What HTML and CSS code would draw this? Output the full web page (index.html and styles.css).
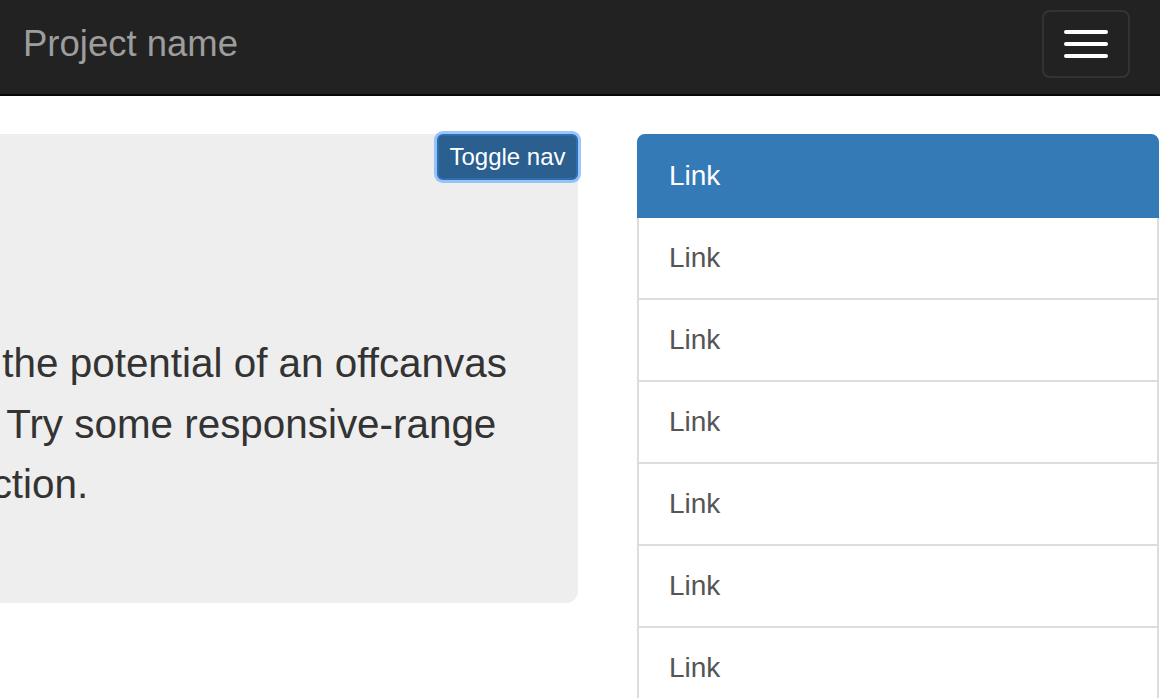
FILE: index.html
```html
<!DOCTYPE html>
<html lang="en">
<head>
<meta charset="utf-8">
<title>Off Canvas Template</title>
<link rel="stylesheet" href="styles.css">
</head>
<body>
<nav class="navbar">
  <a class="brand" href="#">Project name</a>
  <button class="navbar-toggle" type="button" aria-label="Toggle navigation">
    <span class="icon-bar"></span>
    <span class="icon-bar"></span>
    <span class="icon-bar"></span>
  </button>
</nav>
<div class="main">
  <div class="content-col">
    <p class="toggle-wrap"><button type="button" class="btn-toggle">Toggle nav</button></p>
    <div class="jumbotron">
      <h1>Hello, world!</h1>
      <p class="lead"><span class="line line-1">This is an example to show the potential of an offcanvas</span><span class="line line-2">layout pattern in Bootstrap. Try some responsive-range</span><span class="line">viewport sizes to see it in action.</span></p>
    </div>
  </div>
  <div class="sidebar">
    <div class="list-group">
      <a href="#" class="list-item active">Link</a>
      <a href="#" class="list-item">Link</a>
      <a href="#" class="list-item">Link</a>
      <a href="#" class="list-item">Link</a>
      <a href="#" class="list-item">Link</a>
      <a href="#" class="list-item">Link</a>
      <a href="#" class="list-item">Link</a>
      <a href="#" class="list-item">Link</a>
    </div>
  </div>
</div>
</body>
</html>
```
FILE: styles.css
```css
* { box-sizing: border-box; }
html, body {
  margin: 0;
  padding: 0;
  width: 1160px;
  height: 698px;
  overflow: hidden;
  background: #fff;
  font-family: "Liberation Sans", Arial, Helvetica, sans-serif;
  color: #333;
}
.navbar {
  height: 96px;
  background: #222;
  border-bottom: 2px solid #080808;
  display: flex;
  align-items: flex-start;
  justify-content: space-between;
}
.brand {
  display: block;
  padding: 24px 0 0 23px;
  font-size: 36.5px;
  line-height: 40px;
  color: #9d9d9d;
  text-decoration: none;
}
.navbar-toggle {
  margin: 10px 30px 0 0;
  width: 88px;
  height: 68px;
  padding: 0;
  background: transparent;
  border: 2px solid #333;
  border-radius: 8px;
  display: flex;
  flex-direction: column;
  align-items: center;
  justify-content: center;
  gap: 8px;
}
.icon-bar {
  display: block;
  width: 44px;
  height: 4px;
  border-radius: 2px;
  background: #fff;
}
.main {
  padding-top: 38px;
  display: flex;
  gap: 60px;
  align-items: flex-start;
}
.content-col {
  flex: 0 0 578px;
  width: 578px;
}
.toggle-wrap {
  float: right;
  margin: 0;
  padding: 0;
}
.btn-toggle {
  display: block;
  margin: 0;
  width: 141px;
  height: 46px;
  padding: 0 10px;
  font-family: "Liberation Sans", Arial, Helvetica, sans-serif;
  font-size: 24px;
  line-height: 40px;
  color: #fff;
  background: #2a5f8f;
  border: 2px solid #2f6db3;
  border-radius: 6px;
  box-shadow: 0 0 0 3px rgba(120, 180, 250, 0.75);
}
.jumbotron {
  margin-left: -521px;
  height: 469px;
  padding: 60px 30px;
  background: #eee;
  border-radius: 12px;
}
.jumbotron h1 {
  margin: 40px 0 20px;
  font-size: 72px;
  line-height: 79px;
  font-weight: 500;
}
.lead {
  margin: 0;
  font-size: 40.4px;
  line-height: 60.5px;
  color: #333;
}
.line {
  display: block;
  white-space: nowrap;
}
.line-1 { margin-left: -5px; }
.line-2 { margin-left: 4px; }
.sidebar {
  flex: 0 0 522px;
  width: 522px;
  margin-left: -1px;
}
.list-group {
  display: flex;
  flex-direction: column;
}
.list-item {
  position: relative;
  display: block;
  padding: 20px 30px;
  margin-bottom: -2px;
  font-size: 28px;
  line-height: 40px;
  color: #555;
  text-decoration: none;
  background: #fff;
  border: 2px solid #ddd;
}
.list-item:first-child {
  border-top-left-radius: 8px;
  border-top-right-radius: 8px;
}
.list-item.active {
  z-index: 2;
  color: #fff;
  background: #337ab7;
  border-color: #337ab7;
}
```
